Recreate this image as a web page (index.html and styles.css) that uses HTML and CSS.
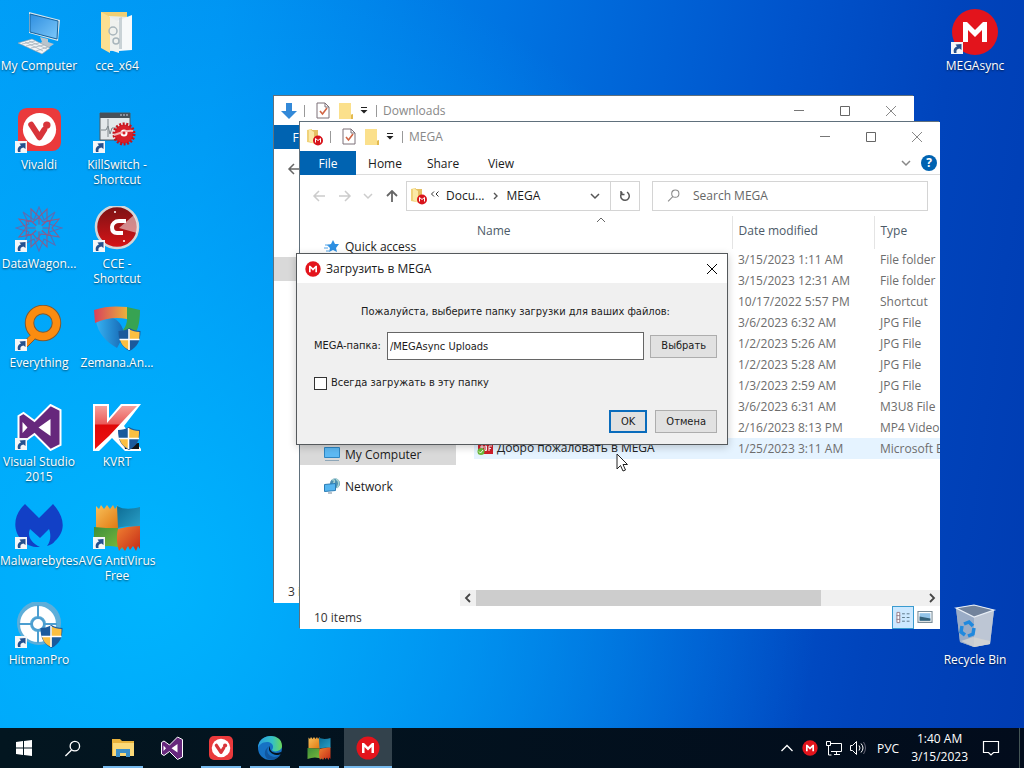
FILE: index.html
```
<!DOCTYPE html>
<html lang="en">
<head>
<meta charset="utf-8">
<title>Desktop</title>
<link rel="stylesheet" href="styles.css">
</head>
<body>
<svg class="defs" aria-hidden="true">
  <defs>
    <linearGradient id="screen" x1="0" y1="0" x2="1" y2="1"><stop offset="0" stop-color="#2e8ee0"/><stop offset="1" stop-color="#7cc8fa"/></linearGradient>
    <linearGradient id="zr" x1="0" x2="1"><stop offset="0" stop-color="#d8405c"/><stop offset="1" stop-color="#e9b13c"/></linearGradient>
    <linearGradient id="zb" x1="0" x2="1"><stop offset="0" stop-color="#36b2f2"/><stop offset="1" stop-color="#1668b4"/></linearGradient>
    <linearGradient id="kv" x1="0" y1="0" x2="0" y2="1"><stop offset="0" stop-color="#f4a09c"/><stop offset=".42" stop-color="#ea5a58"/><stop offset=".44" stop-color="#e00808"/><stop offset="1" stop-color="#ee1010"/></linearGradient>
    <linearGradient id="ccr" x1="0" y1="0" x2="0" y2="1"><stop offset="0" stop-color="#7a1214"/><stop offset="1" stop-color="#d81418"/></linearGradient>
    <linearGradient id="edg" x1="0" y1="0" x2="1" y2="0"><stop offset="0" stop-color="#2a9fe0"/><stop offset=".6" stop-color="#35c1c4"/><stop offset="1" stop-color="#6cd858"/></linearGradient>
    <linearGradient id="ao" x1="0" y1="0" x2="1" y2="1"><stop offset="0" stop-color="#f8c05a"/><stop offset="1" stop-color="#e07810"/></linearGradient>
    <linearGradient id="ab" x1="0" y1="0" x2="1" y2="1"><stop offset="0" stop-color="#0d6c94"/><stop offset="1" stop-color="#2aa0c8"/></linearGradient>
    <linearGradient id="ag" x1="0" y1="0" x2="1" y2="1"><stop offset="0" stop-color="#3d8f3a"/><stop offset="1" stop-color="#7dbb3c"/></linearGradient>
    <linearGradient id="ar" x1="0" y1="0" x2="1" y2="1"><stop offset="0" stop-color="#f08030"/><stop offset="1" stop-color="#c42a18"/></linearGradient>
    <symbol id="arrow" viewBox="0 0 12 12"><path d="M0 0h12v12H0z" fill="#f4f6f8"/><path d="M3 11C2 7 4 5 6 4.500L4.500 2.500 10.500 2v6L8.500 6.500C6 7 5 8 5.500 11z" fill="#24508e"/></symbol>
    <symbol id="shield" viewBox="0 0 22 23"><path d="M11 0c3 2 7 3 11 3 0 10-3 16-11 20C3 19 0 13 0 3c4 0 8-1 11-3z" fill="#1b5a9c"/><path d="M11 1.500V11.500H1.500C1 9 1 6 1 4c4 0 7-1 10-2.500zM11 11.500h9.500C19 17 16 20 11 22z" fill="#fbbf42"/><path d="M10.500 1v21M1 11.500h20" stroke="#fff" stroke-width="1.200"/></symbol>
    <symbol id="shield2" viewBox="0 0 22 23"><path d="M11 0c3 2 7 3 11 3 0 10-3 16-11 20C3 19 0 13 0 3c4 0 8-1 11-3z" fill="#1b5a9c"/><path d="M11 1.500V11.500h9.500C21 9 21 6 21 4c-4 0-7-1-10-2.500zM11 11.500H1.500C3 17 6 20 11 22z" fill="#fbbf42"/><path d="M10.500 1v21M1 11.500h20" stroke="#fff" stroke-width="1.500"/></symbol>
    <symbol id="mega" viewBox="0 0 48 48"><circle cx="24" cy="24" r="23" fill="#e3141c"/><path d="M12 34V14h4l8 8 8-8h4v20h-5V22l-7 7-7-7v12z" fill="#fff"/></symbol>
    <symbol id="vivaldi" viewBox="0 0 44 44"><rect width="44" height="44" rx="9" fill="#ea3a3c"/><circle cx="22" cy="22" r="17" fill="#fff"/><path d="M13.500 17l8.500 13L27 22" fill="none" stroke="#d8343a" stroke-width="6" stroke-linecap="round" stroke-linejoin="round"/><circle cx="29.500" cy="17.500" r="3.800" fill="#d8343a"/></symbol>
    <symbol id="vs" viewBox="0 0 46 48"><path d="M2 13l5-3 11 8L34 2l10 5v35l-10 5-16-16-11 8-5-3z" fill="#66287c" stroke="#fff" stroke-width="2"/><path d="M6 19v11l5-5.500zM22 24.500L34 16v17z" fill="#fff"/></symbol>
    <symbol id="avg" viewBox="0 0 48 48"><path d="M3 3l3 3 2-4 3 4 3-4 3 4 3-4 2 4 3-4 1 23H3z" fill="url(#ao)"/><path d="M24 3c7 4 15 3 23 1v20c-8-1-16-1-22 1z" fill="url(#ab)"/><path d="M1 24c8 1 16 1 24 1 0 8 1 14 5 21-9-4-19-4-29 0z" fill="url(#ag)"/><path d="M25 26c7-2 15-3 22-3v23l-2-3-2 5-3-5-3 4-2-4-3 5-3-4-3 4c-2-7-3-15-1-22z" fill="url(#ar)"/></symbol>
    <symbol id="folder" viewBox="0 0 16 18"><path d="M1 1h11v12h3v4H1z" fill="#f5d772"/><path d="M12 13l3-1v5H2z" fill="#e3ba50"/><path d="M1 1h12v16H1z" fill="#fbe08c"/></symbol>
    <symbol id="check" viewBox="0 0 14 17"><path d="M1 1h8l4 4v11H1z" fill="#fff" stroke="#7d7078"/><path d="M9 1v4h4" fill="none" stroke="#7d7078"/><path d="M4 9l2.500 3L11 6" fill="none" stroke="#d06444" stroke-width="1.600"/></symbol>
    <symbol id="megafolder" viewBox="0 0 18 18"><path d="M1 2l5-1v14l-5-1z" fill="#f0d27a"/><path d="M6 2h6v13H6z" fill="#e5c063"/><path d="M3 1l5 3v12l-5-3z" fill="#fbe9a6"/><circle cx="12" cy="12.500" r="5" fill="#d8141c"/><path d="M9.500 14.500v-4l2.500 2 2.500-2v4" fill="none" stroke="#fff"/></symbol>
    <symbol id="more" viewBox="0 0 8 7"><path d="M1 .5h6" stroke="#222"/><path d="M.5 3h7L4 6.500z" fill="#222"/></symbol>
    <symbol id="min" viewBox="0 0 12 12"><path d="M1 5.500h10" stroke="#777"/></symbol>
    <symbol id="max" viewBox="0 0 12 12"><path d="M1.500 1.500h9v9h-9z" fill="none" stroke="#666"/></symbol>
    <symbol id="x" viewBox="0 0 12 12"><path d="M1 1l10 10M11 1L1 11" stroke="currentColor" fill="none"/></symbol>
    <symbol id="back" viewBox="0 0 14 12"><path d="M13 6H2M7 1L2 6l5 5" fill="none" stroke="currentColor" stroke-width="1.500"/></symbol>
    <symbol id="down" viewBox="0 0 10 8"><path d="M1 2l4 4 4-4" fill="none" stroke="currentColor" stroke-width="1.500"/></symbol>
    <symbol id="glass" viewBox="0 0 18 18"><circle cx="11.500" cy="6.500" r="5" fill="none" stroke="currentColor" stroke-width="1.400"/><path d="M8 10.500L1.500 17" stroke="currentColor" stroke-width="1.400"/></symbol>
  </defs>
</svg>

<div class="screen">
<main class="desktop">
  <nav class="icons" aria-label="Desktop icons">
    <a class="icon" href="#"><svg viewBox="0 0 48 48"><path d="M14 4l31 8-2 21-29-8z" fill="#d9e6ee"/><path d="M15 6l28 7-1 18-27-7z" fill="url(#screen)" stroke="#14629c"/><path d="M25 29l8 2v3l6 2-6 4-10-4 4-2z" fill="#b9c4cc"/><path d="M3 35l14-4 18 9-8 6z" fill="#f2f4f6" stroke="#8d9aa4" stroke-width=".6"/><path d="M7 36l13-3M11 38l13-3M16 40l13-3M21 43l12-4M10 34l18 9M14 33l18 8" stroke="#9caab4" stroke-width=".7"/></svg><span>My Computer</span></a>
    <a class="icon" href="#"><svg viewBox="0 0 48 48"><use href="#vivaldi" x="3" y="1" width="43" height="43"/><use href="#arrow" x="0" y="34" width="12" height="12"/></svg><span>Vivaldi</span></a>
    <a class="icon" href="#"><svg viewBox="0 0 48 48"><g fill="none" stroke="#596eb4" stroke-width="1.100"><path d="M24 1l5 13 11-8-6 12 13 4-13 4 6 13-11-6-5 12-5-12-11 6 6-13-13-4 13-4-6-12 11 8z"/><path d="M16 3l8 8 8-8v12l12-2-7 9 7 9-12-2v12l-8-8-8 8V29L4 31l7-9-7-9 12 2z" stroke="#8d5d88"/><path d="M24 11l4 5 7-1-1 7-1 7-7-1-4 5-4-5-7 1 1-7-1-7 7 1zM16 15l16 14M32 15L16 29M24 11v22M13 22h22" stroke="#8a5c8c"/></g><circle cx="24" cy="22" r="3.500" fill="#17a9ee"/><use href="#arrow" x="0" y="34" width="12" height="12"/></svg><span>DataWagon...</span></a>
    <a class="icon" href="#"><svg viewBox="0 0 48 48"><path d="M5 40l12-11 4 4L9 45z" fill="#f58a14" stroke="#7d5a35"/><circle cx="28" cy="18" r="13.500" fill="none" stroke="#7d5a35" stroke-width="9.500"/><circle cx="28" cy="18" r="13.500" fill="none" stroke="#fb8c10" stroke-width="7.500"/><path d="M13 33l6-6 4 4-6 5z" fill="#fb8c10"/><use href="#arrow" x="0" y="34" width="12" height="12"/></svg><span>Everything</span></a>
    <a class="icon" href="#"><svg viewBox="0 0 48 48"><use href="#vs" x="1" y="-1" width="47" height="48"/><use href="#arrow" x="0" y="34" width="12" height="12"/></svg><span>Visual Studio 2015</span></a>
    <a class="icon" href="#"><svg viewBox="0 0 48 48"><path d="M10 1l14 14L38 1c11 12 14 26 2 37-2 3-5 4-8 5 4-5 4-12 2-17l-9 9-10-9c-3 7 1 14 10 18C2 45-9 18 10 1z" fill="#1240c6"/><use href="#arrow" x="0" y="34" width="12" height="12"/></svg><span>Malwarebytes</span></a>
    <a class="icon" href="#"><svg viewBox="0 0 48 48"><circle cx="24" cy="21" r="22" fill="#8faec6" opacity=".65"/><circle cx="23" cy="22" r="13" fill="none" stroke="#fff" stroke-width="10"/><path d="M23 3v38M4 22h38" stroke="#4c9ed0" stroke-width="2"/><circle cx="23" cy="22" r="6" fill="#fff" stroke="#4c9ed0" stroke-width="2"/><use href="#shield2" x="25" y="23" width="23" height="23"/><use href="#arrow" x="0" y="34" width="12" height="12"/></svg><span>HitmanPro</span></a>
    <a class="icon" href="#"><svg viewBox="0 0 48 48"><path d="M8 4h26v36H8z" fill="#f1cf73"/><path d="M16 8l20 1v32l-19 2z" fill="#e8ecec"/><path d="M24 13l15-6v35l-13 1z" fill="#f7f9fa"/><path d="M26 10l3-1v32h-3z" fill="#c9d2d6"/><path d="M8 4l9 5v36L8 40z" fill="#fbdf91"/><path d="M17 9l9 5v31l-9-3z" fill="#eff1ee"/><circle cx="20" cy="23" r="4" fill="none" stroke="#a8b5bb" stroke-width="1.500"/><circle cx="23" cy="33" r="3" fill="none" stroke="#a8b5bb" stroke-width="1.500"/></svg><span>cce_x64</span></a>
    <a class="icon" href="#"><svg viewBox="0 0 48 48"><path d="M7 6h30v27H7z" fill="#e3e8ea" stroke="#51585d"/><path d="M7 6h30v5H7z" fill="#485058"/><path d="M27 8h8" stroke="#ccd" stroke-dasharray="2 1"/><path d="M8 23h5l2-4 2 8 2-6h5M15 12v18" stroke="#7c868a" fill="none"/><circle cx="31" cy="27" r="9.500" fill="#d8202a"/><circle cx="31" cy="27" r="10" fill="none" stroke="#c4141c" stroke-width="3" stroke-dasharray="2 1.500"/><circle cx="31" cy="26" r="3.500" fill="#fff"/><path d="M21 28c7-2 12-5 19-4" stroke="#f2b4b6" stroke-width="2" fill="none"/><circle cx="31" cy="26" r="1.500" fill="#d8202a"/><use href="#arrow" x="0" y="34" width="12" height="12"/></svg><span>KillSwitch - Shortcut</span></a>
    <a class="icon" href="#"><svg viewBox="0 0 48 48"><circle cx="24" cy="21" r="21" fill="url(#ccr)" stroke="#d4d6d8" stroke-width="2.500"/><path d="M26 22L41 9c4 8 4 13 3 18z" fill="#fff" opacity=".5"/><path d="M33 15h-7c-4 0-7 3-7 6s1 6 5 6h6" fill="none" stroke="#fff" stroke-width="4"/><circle cx="22" cy="6" r="1" fill="#fff"/><circle cx="31" cy="35" r="1" fill="#fff"/><use href="#arrow" x="0" y="34" width="12" height="12"/></svg><span>CCE - Shortcut</span></a>
    <a class="icon" href="#"><svg viewBox="0 0 48 48"><path d="M3 16l14-4c8 2 13 8 14 18l-7 13C13 37 5 28 3 16z" fill="url(#zb)"/><path d="M1 5c11-4 22-4 33-3v12c-11-2-21-1-32 4z" fill="url(#zr)"/><path d="M34 2l13 3c0 14-3 23-8 28l-9-8c3-4 4-7 4-11z" fill="#37a352"/><use href="#shield2" x="25" y="23" width="23" height="23"/></svg><span>Zemana.An...</span></a>
    <a class="icon" href="#"><svg viewBox="0 0 48 48"><path d="M0 0h16v14L28 0h20L31 22l17 23v2H32L19 34 6 47H0z" fill="#fff"/><path d="M2 2h12v17L29 2h15L16 32 2 45z" fill="url(#kv)"/><path d="M31 40l15-1v6H32z" fill="#101418"/><use href="#shield2" x="25" y="23" width="22" height="23"/></svg><span>KVRT</span></a>
    <a class="icon" href="#"><svg viewBox="0 0 48 48"><use href="#avg" width="48" height="48"/><use href="#arrow" x="0" y="34" width="12" height="12"/></svg><span>AVG AntiVirus Free</span></a>
  </nav>
  <nav class="icons right" aria-label="More desktop icons">
    <a class="icon" href="#"><svg viewBox="0 0 48 48"><use href="#mega" width="48" height="48"/><use href="#arrow" x="0" y="34" width="12" height="12"/></svg><span>MEGAsync</span></a>
    <a class="icon" href="#"><svg viewBox="0 0 48 48"><path d="M5 6l18-3 20 5-4 34-16 3-14-5z" fill="#a7b6cc"/><path d="M5 6l18 8v31L9 40z" fill="#9aacc6"/><path d="M23 14l20-6-4 34-16 3z" fill="#bdc6d4"/><path d="M5 6l18-3 20 5-20 7z" fill="#72839c" stroke="#e8eef6" stroke-width="1.200"/><path d="M10 39l12-4 17 4v3l-16 3z" fill="#d4d4d2" opacity=".8"/><g fill="none" stroke="#2089de" stroke-width="3.500"><path d="M13 22l5-2 4 4M11 24l-1 6 4 3M17 34l5-2 1-6"/></g></svg><span>Recycle Bin</span></a>
  </nav>

  <section class="window back" aria-label="Downloads">
    <header class="titlebar">
      <svg class="i18" viewBox="0 0 18 18"><path d="M6 1h6v8h5l-8 8-8-8h5z" fill="#3389d8"/></svg>
      <i class="bar"></i><svg class="chk"><use href="#check"/></svg><svg class="fold"><use href="#folder"/></svg><svg class="tri"><use href="#more"/></svg><i class="bar"></i>
      <span class="title">Downloads</span>
      <div class="controls"><button aria-label="Minimize"><svg><use href="#min"/></svg></button><button aria-label="Maximize"><svg><use href="#max"/></svg></button><button aria-label="Close"><svg><use href="#x"/></svg></button></div>
    </header>
    <div class="tabs"><button class="file">File</button></div>
    <div class="backnav"><svg class="arr"><use href="#back"/></svg></div>
    <div class="backmark"></div>
    <footer class="status">3 items</footer>
  </section>

  <section class="window front" aria-label="MEGA">
    <header class="titlebar">
      <svg class="i18"><use href="#megafolder"/></svg>
      <i class="bar"></i><svg class="chk"><use href="#check"/></svg><svg class="fold"><use href="#folder"/></svg><svg class="tri"><use href="#more"/></svg><i class="bar"></i>
      <span class="title">MEGA</span>
      <div class="controls"><button aria-label="Minimize"><svg><use href="#min"/></svg></button><button aria-label="Maximize"><svg><use href="#max"/></svg></button><button aria-label="Close"><svg><use href="#x"/></svg></button></div>
    </header>
    <div class="tabs"><button class="file">File</button><button>Home</button><button>Share</button><button>View</button>
      <span class="help"><svg class="chev"><use href="#down"/></svg><button class="q" aria-label="Help">?</button></span></div>
    <div class="address">
      <div class="arrows"><svg class="arr off"><use href="#back"/></svg><svg class="arr off" viewBox="0 0 14 12"><path d="M1 6h11M7 1l5 5-5 5" fill="none" stroke="currentColor" stroke-width="1.500"/></svg><svg class="chev off"><use href="#down"/></svg><svg class="arr" viewBox="0 0 14 12"><path d="M7 12V1M2 6l5-5 5 5" fill="none" stroke="currentColor" stroke-width="1.800"/></svg></div>
      <div class="path"><svg class="i18"><use href="#megafolder"/></svg><svg class="laq" viewBox="0 0 10 6"><path d="M4 .5L1.500 3 4 5.500M8.500 .5L6 3l2.500 2.500" fill="none" stroke="#333"/></svg><span class="docs">Docu...</span><svg class="gt" viewBox="0 0 6 8"><path d="M1 1l3 3-3 3" fill="none" stroke="#555" stroke-width="1.400"/></svg><span>MEGA</span><svg class="chev end"><use href="#down"/></svg>
        <button class="refresh" aria-label="Refresh"><svg viewBox="0 0 12 12"><path d="M3.500 2.500A4.300 4.300 0 1 0 8 2.200M2 1v3.500h3.500" fill="none" stroke="#555" stroke-width="1.500"/></svg></button></div>
      <label class="search"><svg><use href="#glass"/></svg><input type="text" placeholder="Search MEGA" aria-label="Search MEGA"></label>
    </div>
    <div class="content">
      <nav class="tree">
        <a href="#"><svg viewBox="0 0 16 16"><path d="M9 2l2 4h4l-3 4 1 4-4-2-4 2 1-4-3-3 4-1z" fill="#2c8fe2"/><path d="M1 7h4M0 10h4M2 13h3" stroke="#52a4e8"/></svg>Quick access</a>
        <a class="sel" href="#"><svg viewBox="0 0 16 16"><path d="M.5 1.500h15v10H.5z" fill="#5db9f3" stroke="#2f86c2"/><path d="M1 14.500h14" stroke="#8da6b8"/></svg>My Computer</a>
        <a href="#"><svg viewBox="0 0 16 16"><circle cx="11" cy="5.500" r="5" fill="#4c8fb0"/><path d="M8 2c3-1 3 2 1 4M12 1c4 2 3 6 1 9" stroke="#a8d3d0" stroke-width="1.500" fill="none"/><path d="M.5 6.500l11-1v7l-11 1z" fill="#55b6f0" stroke="#2b7cb4"/><path d="M4 15h4" stroke="#789"/></svg>Network</a>
      </nav>
      <div class="list">
        <div class="viewport">
        <table>
          <thead><tr><th class="n">Name<svg class="sort" viewBox="0 0 10 6"><path d="M1 5l4-4 4 4" fill="none" stroke="#666"/></svg></th><th class="d">Date modified</th><th>Type</th></tr></thead>
          <tbody>
            <tr><td class="n"><svg class="rowicon"><use href="#folder"/></svg></td><td>3/15/2023 1:11 AM</td><td>File folder</td></tr>
            <tr><td></td><td>3/15/2023 12:31 AM</td><td>File folder</td></tr>
            <tr><td></td><td>10/17/2022 5:57 PM</td><td>Shortcut</td></tr>
            <tr><td></td><td>3/6/2023 6:32 AM</td><td>JPG File</td></tr>
            <tr><td></td><td>1/2/2023 5:26 AM</td><td>JPG File</td></tr>
            <tr><td></td><td>1/2/2023 5:28 AM</td><td>JPG File</td></tr>
            <tr><td></td><td>1/3/2023 2:59 AM</td><td>JPG File</td></tr>
            <tr><td></td><td>3/6/2023 6:31 AM</td><td>M3U8 File</td></tr>
            <tr><td></td><td>2/16/2023 8:13 PM</td><td>MP4 Video</td></tr>
            <tr class="hot"><td class="n"><svg class="rowicon" viewBox="0 0 16 16"><path d="M1 3h15v10H1z" fill="#cf1f2b"/><path d="M4 10V5h2v2H4M8 5v4.500h1.500V5zM12 10V5h3M12 7.500h2" fill="none" stroke="#fff"/><circle cx="4" cy="10.500" r="3.500" fill="#6cbc3c"/><path d="M2 10.500l1.500 1.500L6 9" stroke="#fff" fill="none"/></svg>Добро пожаловать в MEGA</td><td>1/25/2023 3:11 AM</td><td>Microsoft E</td></tr>
          </tbody>
        </table>
        </div>
        <div class="scroll"><button aria-label="Scroll left"><svg viewBox="0 0 8 10"><path d="M6 1L2 5l4 4" fill="none" stroke="#444" stroke-width="1.800"/></svg></button><div class="track"><div class="thumb"></div></div><button aria-label="Scroll right"><svg viewBox="0 0 8 10"><path d="M2 1l4 4-4 4" fill="none" stroke="#444" stroke-width="1.800"/></svg></button></div>
      </div>
    </div>
    <footer class="status">10 items<span class="views"><button class="on" aria-label="Details"><svg viewBox="0 0 16 14"><path d="M1.500 1.500h3v11h-3zM1 5h4M1 9h4" fill="#fff" stroke="#957b88"/><path d="M7 3h3M12 3h3M7 7h3M12 7h3M7 11h3M12 11h3" stroke="#577384"/></svg></button><button aria-label="Large icons"><svg viewBox="0 0 14 12"><path d="M.5 .5h13v10H.5z" fill="#fff" stroke="#7a8c98"/><path d="M2 2h10v7H2z" fill="#92c3e8"/><path d="M2 5l5 1 5 1v2H2z" fill="#325f78"/></svg></button></span></footer>
  </section>

  <form class="dialog" role="dialog" aria-labelledby="dt">
    <header><svg class="m"><use href="#mega"/></svg><span id="dt">Загрузить в MEGA</span><button type="button" class="close" aria-label="Close"><svg><use href="#x"/></svg></button></header>
    <div class="body">
      <p>Пожалуйста, выберите папку загрузки для ваших файлов:</p>
      <div class="row"><label for="dir">MEGA-папка:</label><input id="dir" type="text" value="/MEGAsync Uploads"><button type="button">Выбрать</button></div>
      <label class="always"><input type="checkbox">Всегда загружать в эту папку</label>
      <div class="actions"><button type="button" class="ok">OK</button><button type="button">Отмена</button></div>
    </div>
  </form>
  <svg class="cursor" viewBox="0 0 12 19"><path d="M1 1v15l3.500-3.500L7 18l2.500-1L7 11.500h4.500z" fill="#fff" stroke="#222"/></svg>
</main>

<footer class="taskbar">
  <div class="apps">
    <button aria-label="Start"><svg class="s16" viewBox="0 0 16 16"><path d="M0 2l7-1v6.500H0zM8 1l8-1v7.500H8zM0 8.500h7V15l-7-1zM8 8.500h8V16l-8-1z" fill="#fff"/></svg></button>
    <button class="find" aria-label="Search"><svg class="s16"><use href="#glass"/></svg></button>
    <button class="run" aria-label="File Explorer"><svg viewBox="0 0 24 24"><path d="M1 3h8l2 2h12v15H1z" fill="#e8b23c"/><path d="M2 7h21v13H2z" fill="#fbd978"/><path d="M5 13h14v8h-4v-4H9v4H5z" fill="#3c8fc8"/></svg></button>
    <button aria-label="Visual Studio"><svg><use href="#vs"/></svg></button>
    <button class="run" aria-label="Vivaldi"><svg><use href="#vivaldi"/></svg></button>
    <button class="run" aria-label="Edge"><svg viewBox="0 0 24 24"><circle cx="12" cy="12" r="12" fill="#1672c4"/><path d="M0 12C0-3 24-4 24 10c0 5-8 7-10 4 3-5-1-8-5-8-5 0-8 3-9 6z" fill="url(#edg)"/><path d="M12 10c-5 3-3 10 4 11 3 0 5-1 7-3-3 5-8 7-13 5-5-3-4-11 2-13z" fill="#1157a0"/><path d="M12 10c-1 7 6 8 11 6l1 1c-2 2-6 3-9 1-4-2-5-5-3-8z" fill="#04131e"/></svg></button>
    <button class="run" aria-label="AVG"><svg><use href="#avg"/></svg></button>
    <button class="run active" aria-label="MEGAsync"><svg><use href="#mega"/></svg></button>
  </div>
  <div class="tray">
    <svg class="s14" viewBox="0 0 14 14"><path d="M1.500 10L7 4.500 12.500 10" fill="none" stroke="#fff" stroke-width="1.300"/></svg>
    <svg class="s16"><use href="#mega"/></svg>
    <svg class="s16" viewBox="0 0 16 16"><path d="M5 3.500h10.500v8H5M8 14.500h6M10.500 11.500v3M.5 1.500h4v4h-4zM2.500 6v9h3" fill="none" stroke="#fff"/></svg>
    <svg class="s16" viewBox="0 0 16 16"><path d="M.5 5.500h2l4-4v13l-4-4h-2zM9 5.500q2 2.500 0 5M11 3.500q4 4.500 0 9" fill="none" stroke="#fff"/><path d="M13.500 2q4 6 0 12" fill="none" stroke="#667"/></svg>
    <span class="lang">РУС</span>
    <time>1:40 AM<br>3/15/2023</time>
    <svg class="s18" viewBox="0 0 18 18"><path d="M1.500 2.500h15v11h-5L9 16l-2.500-2.500h-5z" fill="none" stroke="#fff" stroke-width="1.200"/></svg>
    <i class="peek"></i>
  </div>
</footer>
</div>
</body>
</html>
```
FILE: styles.css
```
* { box-sizing: border-box; }
body { margin: 0; font: 12px/15px "Open Sans", "Noto Sans", sans-serif; color: #1b1b1b; }
button { border: 0; padding: 0; background: none; font: inherit; color: inherit; }
input { font: inherit; color: inherit; }
a { color: inherit; text-decoration: none; }
svg { display: block; flex: none; }
.defs { position: absolute; width: 0; height: 0; }

.screen { display: flex; flex-direction: column; min-height: 100vh; }
.desktop {
  position: relative; flex: 1; display: flex; justify-content: space-between; overflow: hidden;
  background:
    radial-gradient(ellipse 65% 90% at 15% 80%, rgba(0, 184, 255, .9), rgba(0, 178, 255, .5) 50%, transparent),
    linear-gradient(98deg, #009cf6 0%, #0092f2 20%, #0074e2 45%, #0054cc 70%, #0044bc 85%, #003cb2 100%);
}

/* Desktop icons */
.icons { display: grid; grid-template-rows: repeat(7, 99px); grid-auto-flow: column; grid-auto-columns: 78px; }
.icons.right { padding-right: 10px; }
.icons.right .icon:last-child { grid-row: 7; }
.icon { display: flex; flex-direction: column; align-items: center; padding-top: 8px; gap: 2px; color: #fff; text-align: center; text-shadow: 0 1px 2px rgba(0, 0, 0, .6); }
.icon svg { width: 48px; height: 48px; }
.icon span { width: 78px; }

/* Explorer windows */
.window { position: absolute; width: 640px; height: 507px; display: flex; flex-direction: column; background: #fff; box-shadow: -1px -1px 0 #60707c; }
.back { left: 274px; top: 96px; }
.front { left: 300px; top: 122px; }
.titlebar { display: flex; align-items: center; height: 29px; padding-left: 6px; flex: none; color: #888; }
.titlebar .bar { width: 1px; height: 12px; background: #999; margin-left: 6px; }
.i18 { width: 18px; height: 18px; }
.chk { width: 14px; height: 17px; margin-left: 11px; }
.fold { width: 16px; height: 18px; margin-left: 8px; }
.tri { width: 8px; height: 7px; margin-left: 6px; margin-right: 2px; }
.title { margin-left: 6px; }
.controls { display: flex; margin-left: auto; }
.controls button { width: 46px; height: 28px; display: grid; place-items: center; }
.controls svg { width: 12px; height: 12px; }
.tabs { display: flex; height: 24px; flex: none; border-bottom: 1px solid #dcdcdc; }
.tabs button { width: 58px; height: 24px; }
.tabs .file { width: 56px; background: #0063b1; color: #fff; }
.help { display: flex; align-items: center; gap: 10px; margin-left: auto; padding-right: 3px; color: #888; }
.tabs .q { width: 16px; height: 16px; border-radius: 50%; background: #0063b1; color: #fff; font-weight: 700; }
.chev { width: 10px; height: 8px; }
.arr { width: 14px; height: 12px; color: #666; }
.arr.off, .chev.off { color: #ccc; }
.address { display: flex; align-items: center; height: 41px; flex: none; padding: 0 12px 0 12px; }
.arrows { display: flex; align-items: center; justify-content: space-between; width: 87px; margin-right: 7px; }
.path { display: flex; align-items: center; width: 234px; height: 30px; border: 1px solid #d4d4d4; padding-left: 3px; }
.laq { width: 10px; height: 6px; margin: 0 6px 4px 2px; }
.gt { width: 6px; height: 8px; margin: 0 8px; }
.path .end { margin-left: auto; color: #555; }
.refresh { display: grid; place-items: center; width: 29px; height: 28px; border-left: 1px solid #d4d4d4; margin-left: 10px; }
.refresh svg { width: 12px; height: 12px; }
.search { display: flex; align-items: center; flex: 1; height: 30px; margin-left: 12px; border: 1px solid #d4d4d4; padding-left: 14px; color: #888; }
.search svg { width: 13px; height: 13px; }
.search input { border: 0; outline: 0; padding: 0; margin-left: 13px; width: 100%; min-width: 0; }
.search input::placeholder { color: #666; }
.content { flex: 1; display: flex; min-height: 0; }
.tree { width: 160px; padding-top: 19px; flex: none; }
.tree a { display: flex; align-items: center; gap: 5px; height: 22px; padding-left: 24px; margin-bottom: 10px; }
.tree a:first-child { margin-bottom: 186px; }
.tree svg { width: 16px; height: 16px; }
.tree .sel { background: #d9d9d9; width: 156px; }
.list { flex: 1; display: flex; flex-direction: column; min-width: 0; }
.viewport { flex: 1; overflow: hidden; padding-left: 14px; }
table { border-collapse: collapse; table-layout: fixed; width: 520px; white-space: nowrap; color: #6d6d6d; }
th { font-weight: 400; text-align: left; height: 33px; padding: 0 0 4px 6px; border-right: 1px solid #e4e4e4; color: #4c5a68; }
th.n { width: 258px; position: relative; padding-left: 3px; }
th.d { width: 142px; }
.sort { position: absolute; width: 10px; height: 6px; left: 122px; top: 1px; }
td { height: 21px; padding: 0 0 0 6px; }
td.n { padding-left: 3px; color: #222; }
td.n .rowicon { display: inline-block; vertical-align: middle; margin-right: 4px; }
.rowicon { width: 16px; height: 16px; }
.hot { background: #e5f3ff; }
.scroll { display: flex; height: 16px; flex: none; background: #f0f0f0; }
.scroll button { width: 16px; display: grid; place-items: center; }
.scroll svg { width: 8px; height: 10px; }
.track { flex: 1; }
.thumb { width: 77%; height: 16px; background: #cdcdcd; }
.status { display: flex; align-items: center; height: 23px; flex: none; padding-left: 14px; color: #333; }
.views { margin-left: auto; display: flex; padding-right: 4px; }
.views button { width: 22px; height: 23px; display: grid; place-items: center; }
.views .on { background: #cce8ff; border: 1px solid #3a9bd0; }
.views svg { width: 16px; height: 13px; }
.backnav { padding: 14px 0 0 13px; }
.backmark { height: 24px; margin-top: 82px; background: #d9d9d9; }
.back .status { margin-top: auto; }

/* Upload dialog */
.dialog { position: absolute; left: 296px; top: 253px; width: 432px; height: 192px; border: 1px solid #55595c; background: #f0f0f0; display: flex; flex-direction: column; box-shadow: 0 2px 8px rgba(0, 0, 0, .2); }
.dialog header { height: 29px; display: flex; align-items: center; background: #fff; padding: 0 9px 0 8px; gap: 5px; flex: none; }
.m { width: 16px; height: 16px; }
.close { margin-left: auto; color: #000; }
.close svg { width: 12px; height: 12px; }
.body { flex: 1; display: flex; flex-direction: column; padding: 21px 10px 11px 17px; font: 11px/16px "DejaVu Sans Condensed", "Noto Sans", sans-serif; }
.body p { margin: 0 0 12px; text-align: center; }
.row { display: flex; align-items: center; gap: 6px; }
.row input { flex: 1; min-width: 0; height: 28px; border: 1px solid #666; background: #fff; padding: 0 2px; }
.body button { height: 23px; border: 1px solid #adadad; background: #e1e1e1; padding: 0 10px; }
.always { display: flex; align-items: center; gap: 4px; margin-top: 15px; }
.always input { appearance: none; width: 13px; height: 13px; margin: 0; border: 1px solid #333; background: #fff; }
.actions { display: flex; justify-content: flex-end; gap: 8px; margin-top: auto; }
.actions .ok { border: 2px solid #0a6cbc; }
.cursor { position: absolute; left: 616px; top: 453px; width: 12px; height: 19px; }

/* Taskbar */
.taskbar { display: flex; justify-content: space-between; height: 40px; background: linear-gradient(90deg, #031620, #020c1c); color: #fff; }
.apps { display: flex; gap: 1px; }
.apps button { width: 48px; display: grid; place-items: center; position: relative; }
.find { margin-left: -1px; }
.find + button { margin-left: 2px; }
.apps svg { width: 24px; height: 24px; }
.apps .s16, .s16 { width: 16px; height: 16px; }
.apps .find svg { width: 17px; height: 17px; }
.run::after { content: ""; position: absolute; left: 4px; right: 4px; bottom: 0; height: 2px; background: #76b9ed; }
.apps .active { background: #33424c; }
.active::after { left: 0; right: 0; }
.s14 { width: 14px; height: 14px; }
.s18 { width: 18px; height: 18px; }
.tray { display: flex; align-items: center; gap: 8px; }
.lang { margin-left: 3px; }
.tray time { text-align: center; line-height: 18px; margin: 0 6px 0 4px; }
.peek { width: 1px; align-self: stretch; background: #455; margin: 0 4px 0 11px; }
```
